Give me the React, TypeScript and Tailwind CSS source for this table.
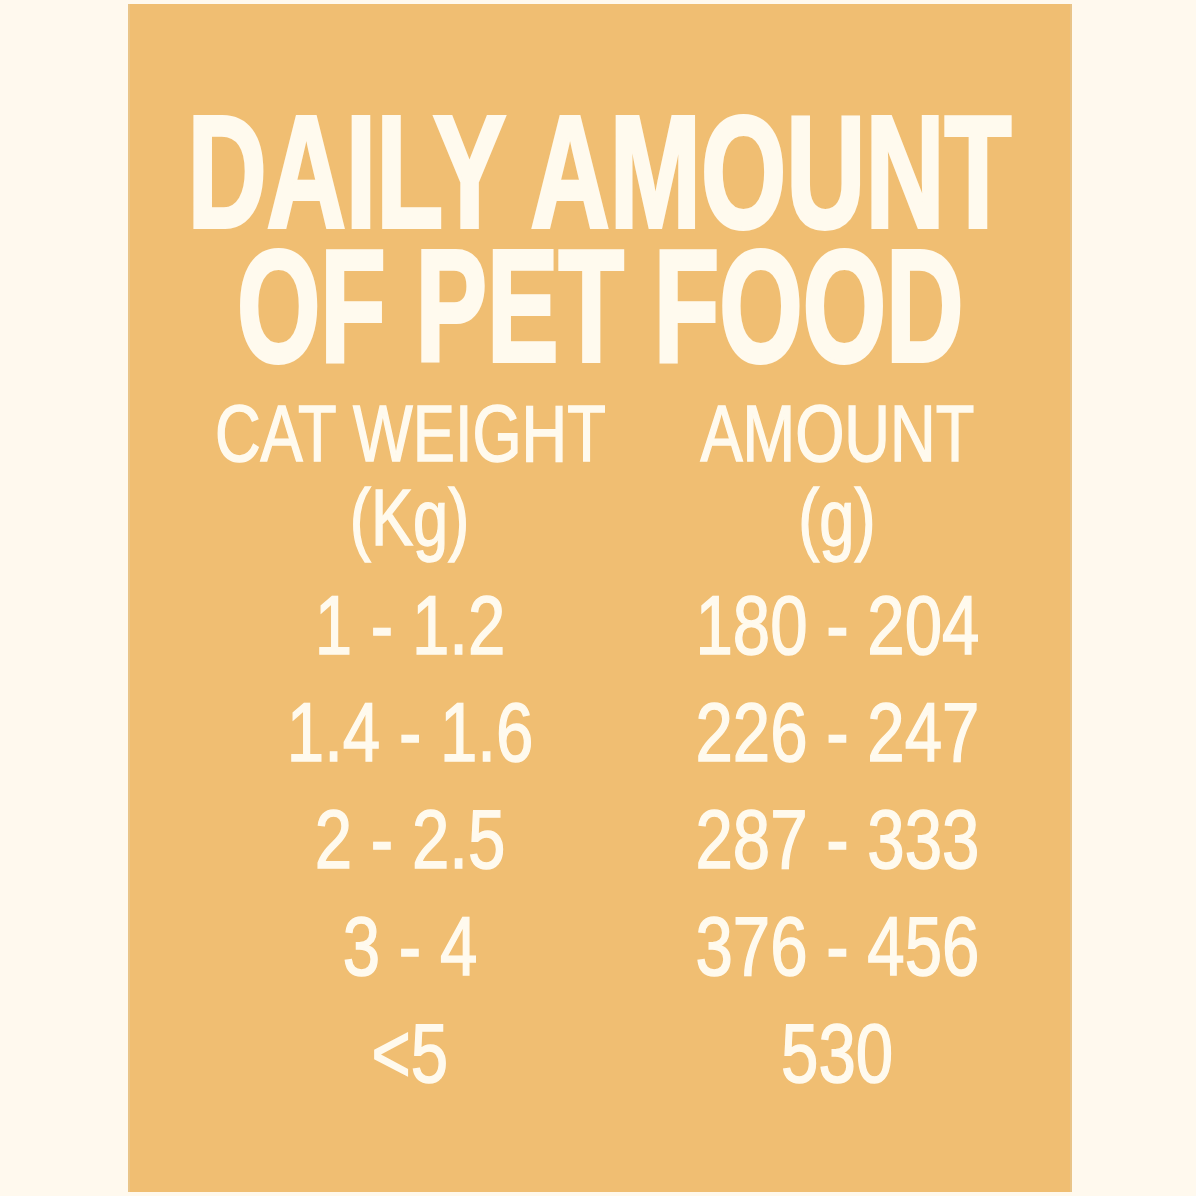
import React from "react";

const rows: [string, string][] = [
  ["1 - 1.2", "180 - 204"],
  ["1.4 - 1.6", "226 - 247"],
  ["2 - 2.5", "287 - 333"],
  ["3 - 4", "376 - 456"],
  ["<5", "530"],
];

function Cell({ children }: { children: React.ReactNode }) {
  return (
    <div className="flex justify-center whitespace-nowrap">
      <span className="inline-block scale-x-[0.8] [-webkit-text-stroke:1.5px_#fffaee]">{children}</span>
    </div>
  );
}

export default function App() {
  return (
    <div className="w-[1196px] h-[1196px] bg-[#fff9ee] pt-[4px] pl-[128px] font-['Liberation_Sans',Arial,sans-serif] text-[#fffaee]">
      <div className="w-[944px] h-[1188px] bg-[#f0be72] border-x-2 border-[#e9c488] pt-[101px] overflow-hidden">
        <div className="flex flex-col items-center font-bold text-[160px] leading-[134px] whitespace-nowrap">
          <span className="inline-block h-[134px] scale-x-[0.685] [-webkit-text-stroke:4px_#fffaee]">DAILY AMOUNT</span>
          <span className="inline-block h-[134px] scale-x-[0.67] [-webkit-text-stroke:4px_#fffaee]">OF PET FOOD</span>
        </div>

        <div className="mt-[19px] ml-[80px] grid grid-cols-[400px_400px] gap-x-[27px] text-[80px] leading-[84px]">
          <div className="flex justify-center whitespace-nowrap">
            <span className="inline-block scale-x-[0.79] [-webkit-text-stroke:1.5px_#fffaee]">CAT WEIGHT</span>
          </div>
          <div className="flex justify-center whitespace-nowrap">
            <span className="inline-block scale-x-[0.79] [-webkit-text-stroke:1.5px_#fffaee]">AMOUNT</span>
          </div>
          <div className="flex justify-center whitespace-nowrap">
            <span className="inline-block scale-x-[0.79] [-webkit-text-stroke:1.5px_#fffaee]">(Kg)</span>
          </div>
          <div className="flex justify-center whitespace-nowrap">
            <span className="inline-block scale-x-[0.79] [-webkit-text-stroke:1.5px_#fffaee]">(g)</span>
          </div>
        </div>

        <div className="mt-[12px] ml-[80px] grid grid-cols-[400px_400px] gap-x-[27px] text-[84px] leading-[107px]">
          {rows.map(([w, a]) => (
            <React.Fragment key={w}>
              <Cell>{w}</Cell>
              <Cell>{a}</Cell>
            </React.Fragment>
          ))}
        </div>
      </div>
    </div>
  );
}
